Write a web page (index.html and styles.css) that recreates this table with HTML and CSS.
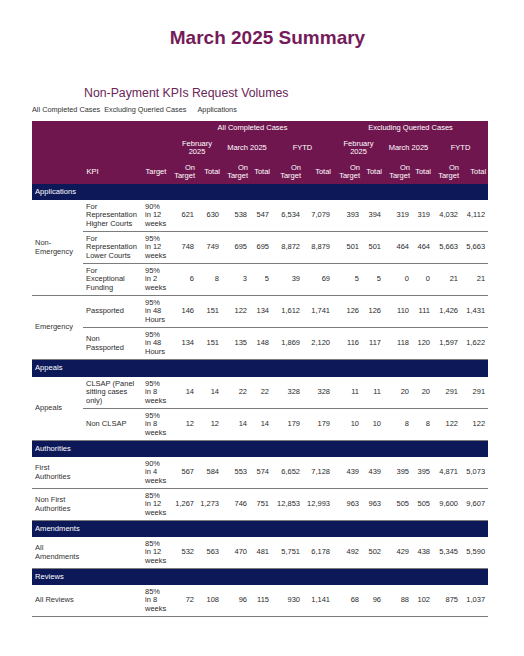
FILE: index.html
```html
<!DOCTYPE html>
<html lang="en">
<head>
<meta charset="utf-8">
<title>March 2025 Summary</title>
<link rel="stylesheet" href="styles.css">
</head>
<body>
<div class="page">
  <h1 class="title">March 2025 Summary</h1>
  <h2 class="subtitle">Non-Payment KPIs Request Volumes</h2>
  <div class="filters">
    <span>All Completed Cases</span>
    <span>Excluding Queried Cases</span>
    <span class="tab3">Applications</span>
  </div>
  <table class="kpi">
    <colgroup>
      <col style="width:51px"><col style="width:59px"><col style="width:30px">
      <col style="width:25px"><col style="width:25px"><col style="width:28px"><col style="width:22px"><col style="width:31px"><col style="width:30px">
      <col style="width:29px"><col style="width:22px"><col style="width:28px"><col style="width:21px"><col style="width:28px"><col style="width:27px">
    </colgroup>
    <thead>
      <tr class="h1">
        <th colspan="3"></th>
        <th colspan="6" class="grp">All Completed Cases</th>
        <th colspan="6" class="grp">Excluding Queried Cases</th>
      </tr>
      <tr class="h2">
        <th colspan="3"></th>
        <th colspan="2" class="grp">February<br>2025</th>
        <th colspan="2" class="grp">March 2025</th>
        <th colspan="2" class="grp">FYTD</th>
        <th colspan="2" class="grp">February<br>2025</th>
        <th colspan="2" class="grp">March 2025</th>
        <th colspan="2" class="grp">FYTD</th>
      </tr>
      <tr class="h3">
        <th></th>
        <th class="lft">KPI</th>
        <th class="lft">Target</th>
        <th class="num ot">On<br>Target</th><th class="num">Total</th>
        <th class="num ot">On<br>Target</th><th class="num">Total</th>
        <th class="num ot">On<br>Target</th><th class="num">Total</th>
        <th class="num ot">On<br>Target</th><th class="num">Total</th>
        <th class="num ot">On<br>Target</th><th class="num">Total</th>
        <th class="num ot">On<br>Target</th><th class="num">Total</th>
      </tr>
    </thead>
    <tbody>
      <tr class="sec"><td colspan="15">Applications</td></tr>
      <tr class="row">
        <td rowspan="3" class="grpcell">Non-<br>Emergency</td>
        <td>For<br>Representation<br>Higher Courts</td>
        <td>90%<br>in 12<br>weeks</td>
        <td class="n">621</td><td class="n">630</td><td class="n">538</td><td class="n">547</td><td class="n">6,534</td><td class="n">7,079</td>
        <td class="n">393</td><td class="n">394</td><td class="n">319</td><td class="n">319</td><td class="n">4,032</td><td class="n">4,112</td>
      </tr>
      <tr class="row">
        <td>For<br>Representation<br>Lower Courts</td>
        <td>95%<br>in 12<br>weeks</td>
        <td class="n">748</td><td class="n">749</td><td class="n">695</td><td class="n">695</td><td class="n">8,872</td><td class="n">8,879</td>
        <td class="n">501</td><td class="n">501</td><td class="n">464</td><td class="n">464</td><td class="n">5,663</td><td class="n">5,663</td>
      </tr>
      <tr class="row">
        <td>For<br>Exceptional<br>Funding</td>
        <td>95%<br>in 2<br>weeks</td>
        <td class="n">6</td><td class="n">8</td><td class="n">3</td><td class="n">5</td><td class="n">39</td><td class="n">69</td>
        <td class="n">5</td><td class="n">5</td><td class="n">0</td><td class="n">0</td><td class="n">21</td><td class="n">21</td>
      </tr>
      <tr class="row">
        <td rowspan="2" class="grpcell">Emergency</td>
        <td>Passported</td>
        <td>95%<br>in 48<br>Hours</td>
        <td class="n">146</td><td class="n">151</td><td class="n">122</td><td class="n">134</td><td class="n">1,612</td><td class="n">1,741</td>
        <td class="n">126</td><td class="n">126</td><td class="n">110</td><td class="n">111</td><td class="n">1,426</td><td class="n">1,431</td>
      </tr>
      <tr class="row">
        <td>Non<br>Passported</td>
        <td>95%<br>in 48<br>Hours</td>
        <td class="n">134</td><td class="n">151</td><td class="n">135</td><td class="n">148</td><td class="n">1,869</td><td class="n">2,120</td>
        <td class="n">116</td><td class="n">117</td><td class="n">118</td><td class="n">120</td><td class="n">1,597</td><td class="n">1,622</td>
      </tr>
      <tr class="sec sec-tall"><td colspan="15">Appeals</td></tr>
      <tr class="row">
        <td rowspan="2" class="grpcell">Appeals</td>
        <td>CLSAP (Panel<br>sitting cases<br>only)</td>
        <td>95%<br>in 8<br>weeks</td>
        <td class="n">14</td><td class="n">14</td><td class="n">22</td><td class="n">22</td><td class="n">328</td><td class="n">328</td>
        <td class="n">11</td><td class="n">11</td><td class="n">20</td><td class="n">20</td><td class="n">291</td><td class="n">291</td>
      </tr>
      <tr class="row">
        <td>Non CLSAP</td>
        <td>95%<br>in 8<br>weeks</td>
        <td class="n">12</td><td class="n">12</td><td class="n">14</td><td class="n">14</td><td class="n">179</td><td class="n">179</td>
        <td class="n">10</td><td class="n">10</td><td class="n">8</td><td class="n">8</td><td class="n">122</td><td class="n">122</td>
      </tr>
      <tr class="sec"><td colspan="15">Authorities</td></tr>
      <tr class="row">
        <td class="grpcell">First<br>Authorities</td>
        <td></td>
        <td>90%<br>in 4<br>weeks</td>
        <td class="n">567</td><td class="n">584</td><td class="n">553</td><td class="n">574</td><td class="n">6,652</td><td class="n">7,128</td>
        <td class="n">439</td><td class="n">439</td><td class="n">395</td><td class="n">395</td><td class="n">4,871</td><td class="n">5,073</td>
      </tr>
      <tr class="row">
        <td class="grpcell">Non First<br>Authorities</td>
        <td></td>
        <td>85%<br>in 12<br>weeks</td>
        <td class="n">1,267</td><td class="n">1,273</td><td class="n">746</td><td class="n">751</td><td class="n">12,853</td><td class="n">12,993</td>
        <td class="n">963</td><td class="n">963</td><td class="n">505</td><td class="n">505</td><td class="n">9,600</td><td class="n">9,607</td>
      </tr>
      <tr class="sec"><td colspan="15">Amendments</td></tr>
      <tr class="row">
        <td class="grpcell">All<br>Amendments</td>
        <td></td>
        <td>85%<br>in 12<br>weeks</td>
        <td class="n">532</td><td class="n">563</td><td class="n">470</td><td class="n">481</td><td class="n">5,751</td><td class="n">6,178</td>
        <td class="n">492</td><td class="n">502</td><td class="n">429</td><td class="n">438</td><td class="n">5,345</td><td class="n">5,590</td>
      </tr>
      <tr class="sec"><td colspan="15">Reviews</td></tr>
      <tr class="row">
        <td class="grpcell">All Reviews</td>
        <td></td>
        <td>85%<br>in 8<br>weeks</td>
        <td class="n">72</td><td class="n">108</td><td class="n">96</td><td class="n">115</td><td class="n">930</td><td class="n">1,141</td>
        <td class="n">68</td><td class="n">96</td><td class="n">88</td><td class="n">102</td><td class="n">875</td><td class="n">1,037</td>
      </tr>
    </tbody>
  </table>
</div>
</body>
</html>
```

FILE: styles.css
```css
html, body {
  margin: 0;
  background: #ffffff;
}

body {
  font-family: "Liberation Sans", Arial, sans-serif;
  color: #2b2b2b;
}

.page {
  padding-top: 27px;
}

.title {
  margin: 0;
  padding-left: 11px;
  font-size: 19px;
  line-height: 22px;
  font-weight: bold;
  color: #761b5a;
  text-align: center;
}

.subtitle {
  margin: 36.5px 0 0;
  padding-left: 84px;
  font-size: 12.3px;
  line-height: 14px;
  font-weight: normal;
  color: #6a2558;
}

.filters {
  display: flex;
  gap: 4px;
  margin-top: 5px;
  padding-left: 32px;
  font-size: 7.3px;
  line-height: 9px;
  color: #333333;
}

.filters .tab3 {
  margin-left: 7px;
}

.kpi {
  margin: 7.5px 0 0 32px;
  width: 456px;
  table-layout: fixed;
  border-collapse: separate;
  border-spacing: 0;
  font-size: 7.5px;
  line-height: 8.5px;
}

.kpi th,
.kpi td {
  padding: 0;
  white-space: nowrap;
  vertical-align: middle;
}

.kpi thead tr {
  background: #70164f;
  color: #ffffff;
}

.kpi thead th {
  font-weight: normal;
}

.kpi .h1 { height: 15px; }
.kpi .h2 { height: 24px; }
.kpi .h3 { height: 24px; }

.kpi th.grp {
  text-align: center;
}

.kpi th.lft {
  text-align: left;
  padding-left: 3.5px;
}

.kpi th.num {
  text-align: right;
  padding-right: 2px;
}

.kpi th.ot {
  line-height: 8px;
}

.kpi .sec {
  height: 16px;
  background: #0c1858;
  color: #ffffff;
}

.kpi .sec-tall {
  height: 17px;
}

.kpi .sec td {
  padding-left: 3px;
  font-size: 7.6px;
}

.kpi .row {
  height: 32px;
}

.kpi .row td {
  border-bottom: 1px solid #7c7c7c;
  padding-left: 3px;
  text-align: left;
  color: #2b2b2b;
}

.kpi .row td.grpcell {
  color: #333333;
}

.kpi .row td.n {
  text-align: right;
  padding-left: 0;
  padding-right: 3px;
}
```
